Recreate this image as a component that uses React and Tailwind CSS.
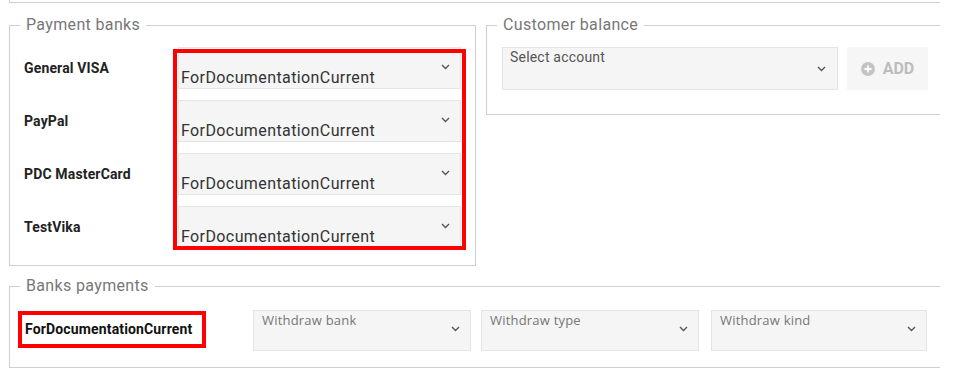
import React from 'react';

const Chevron = ({ className = '' }) => (
  <svg width="9" height="6" viewBox="0 0 9 6" className={className}>
    <polyline points="1,1 4.5,4.5 8,1" fill="none" stroke="#555" strokeWidth="1.4" />
  </svg>
);

function BankSelect({ value }) {
  return (
    <div className="flex h-[42px] w-[283px] justify-between border border-[#e4e4e4] bg-[#f5f5f5]">
      <span className="self-end pb-[1px] pl-[2px] text-[16px] leading-[18px] tracking-[0.4px] text-[#333]">
        {value}
      </span>
      <Chevron className="mr-[10px] mt-[16px]" />
    </div>
  );
}

function PlaceholderSelect({ label, width }) {
  return (
    <div className={`flex h-[41px] justify-between border border-[#e4e4e4] bg-[#f5f5f5] ${width}`}>
      <span className="pl-[8px] font-['Open_Sans'] text-[13px] leading-[18px] tracking-[0.2px] text-[#777]">
        {label}
      </span>
      <Chevron className="mr-[10px] mt-[15px]" />
    </div>
  );
}

const banks = ['General VISA', 'PayPal', 'PDC MasterCard', 'TestVika'];

export default function App() {
  return (
    <div className="h-[379px] w-[954px] overflow-hidden bg-white font-['Roboto',sans-serif]">
      {/* tail of the section above */}
      <div className="ml-[9px] h-[3px] w-[931px] border-b border-l border-[#cfcfcf]" />

      <div className="ml-[9px] mt-[13px] flex items-start gap-[10px]">
        {/* Payment banks */}
        <fieldset className="w-[467px] border border-[#cfcfcf] px-[10px] pb-[17px]">
          <legend className="px-[6px] text-[16px] leading-[18px] tracking-[0.35px] text-[#777]">
            Payment banks
          </legend>
          <div className="mt-[13px] flex pl-[4px]">
            <div className="flex w-[154px] flex-col gap-[11px]">
              {banks.map((b) => (
                <div
                  key={b}
                  className="flex h-[42px] items-center text-[14px] font-bold tracking-[0.15px] text-[#222]"
                >
                  {b}
                </div>
              ))}
            </div>
            <div className="relative flex flex-col gap-[11px]">
              {banks.map((b) => (
                <BankSelect key={b} value="ForDocumentationCurrent" />
              ))}
              <div className="pointer-events-none absolute bottom-[-2px] left-[-5px] right-[-5px] top-[2px] z-10 border-[4px] border-[#ff0000]" />
            </div>
          </div>
        </fieldset>

        {/* Customer balance */}
        <fieldset className="w-[454px] border border-r-0 border-[#cfcfcf] px-[10px] pb-[24px]">
          <legend className="px-[6px] text-[16px] leading-[18px] tracking-[0.35px] text-[#777]">
            Customer balance
          </legend>
          <div className="mt-[13px] flex gap-[9px] pl-[5px]">
            <div className="flex h-[43px] w-[336px] justify-between border border-[#e4e4e4] bg-[#f5f5f5]">
              <span className="pl-[7px] pt-[1px] text-[14px] leading-[16px] tracking-[0.2px] text-[#555]">
                Select account
              </span>
              <Chevron className="mr-[11px] mt-[18px]" />
            </div>
            <button className="flex h-[43px] w-[81px] items-center justify-center gap-[8px] bg-[#f6f6f6] text-[16px] font-bold text-[#bdbdbd]">
              <svg width="14" height="14" viewBox="0 0 14 14">
                <circle cx="7" cy="7" r="7" fill="#c4c4c4" />
                <path d="M7 3.5v7M3.5 7h7" stroke="#fff" strokeWidth="1.8" />
              </svg>
              ADD
            </button>
          </div>
        </fieldset>
      </div>

      {/* Banks payments */}
      <fieldset className="ml-[9px] mt-[11px] w-[931px] border border-r-0 border-[#cfcfcf] px-[10px] pb-[16px]">
        <legend className="px-[6px] text-[16px] leading-[18px] tracking-[0.35px] text-[#777]">
          Banks payments
        </legend>
        <div className="mt-[15px] flex items-start">
          <div className="-ml-[2px] mt-[1px] flex h-[37px] w-[188px] items-center border-[4px] border-[#ff0000] pl-[3px] text-[14px] font-bold tracking-[0.15px] text-[#111]">
            ForDocumentationCurrent
          </div>
          <div className="ml-[47px] flex gap-[10px]">
            <PlaceholderSelect label="Withdraw bank" width="w-[218px]" />
            <PlaceholderSelect label="Withdraw type" width="w-[218px]" />
            <div className="ml-[2px]">
              <PlaceholderSelect label="Withdraw kind" width="w-[216px]" />
            </div>
          </div>
        </div>
      </fieldset>
    </div>
  );
}
